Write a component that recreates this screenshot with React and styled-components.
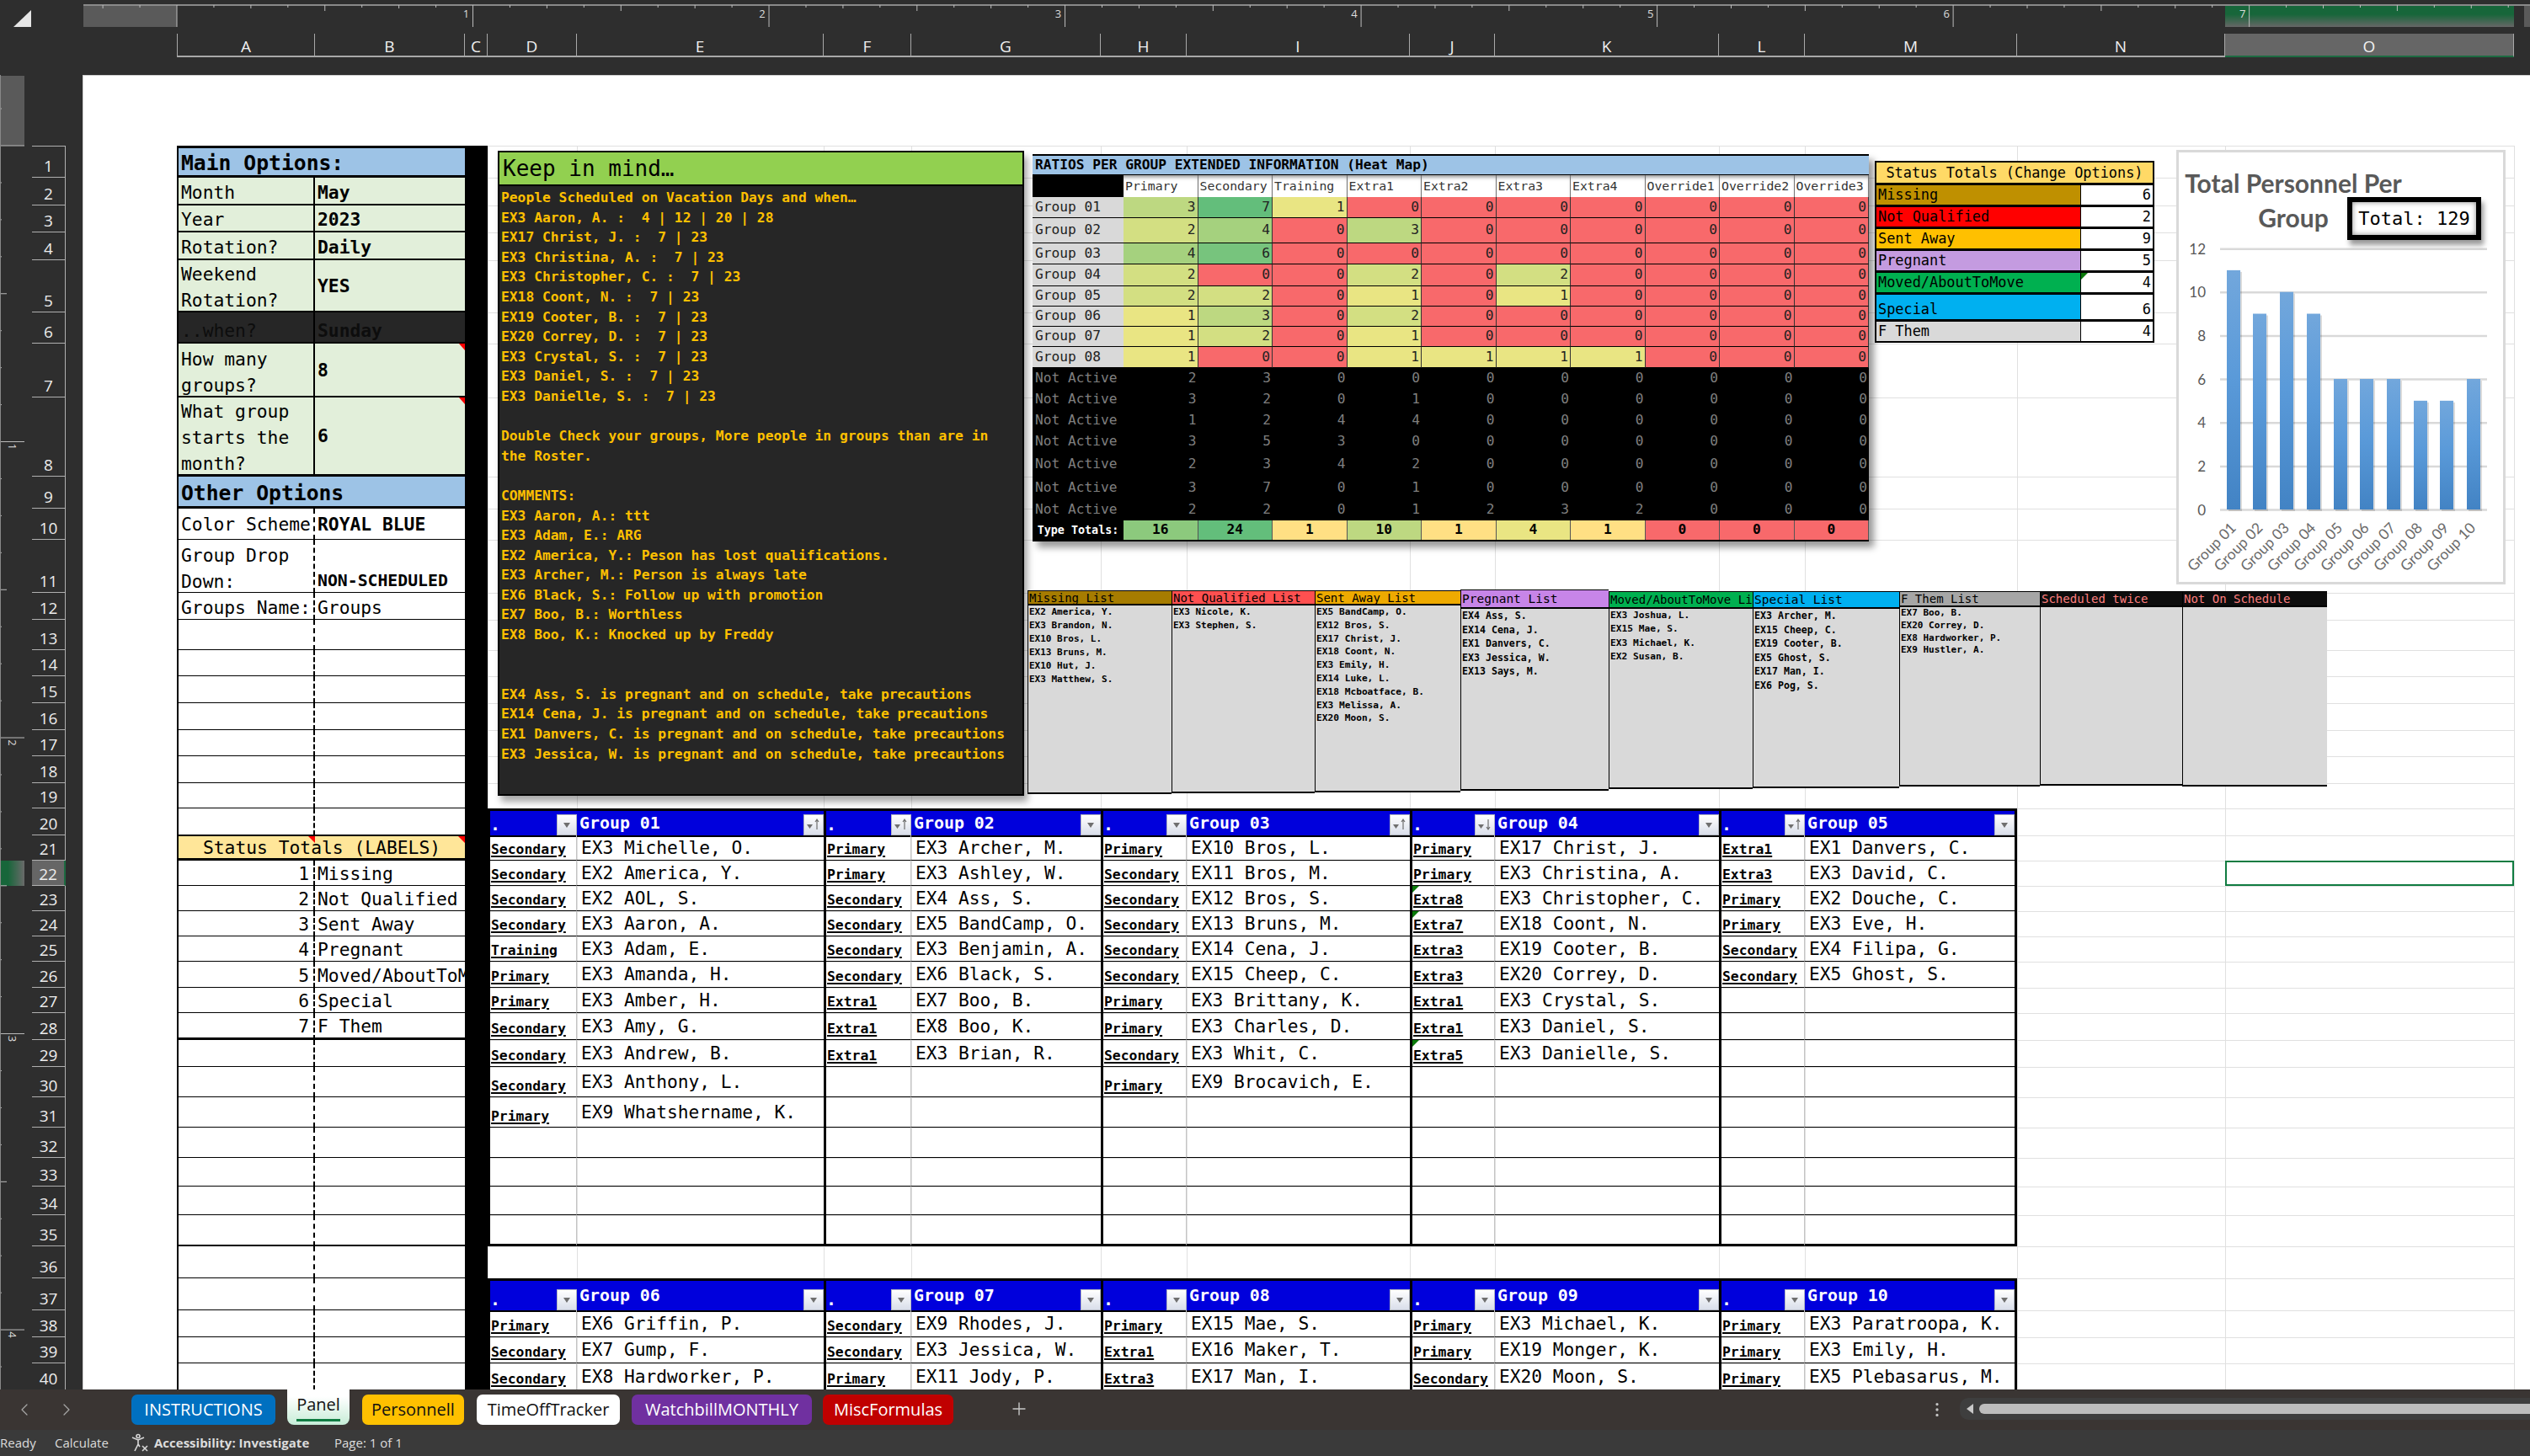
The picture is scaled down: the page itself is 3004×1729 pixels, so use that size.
import React, { Fragment } from "react";
import styled, { createGlobalStyle } from "styled-components";
import { ChevronLeft, ChevronRight, Plus, MoreVertical } from "lucide-react";

const mono = '"DejaVu Sans Mono", "Liberation Mono", monospace';
const ui = '"Open Sans", "Noto Sans", sans-serif';

const colEdges = [210, 374, 552, 579, 685, 978, 1082, 1307, 1409, 1674, 1775, 2041, 2143, 2395, 2642, 2985];
const rowEdges = [173, 211, 244, 276, 309, 371, 408, 472, 566, 604, 641, 704, 736, 772, 803, 835, 867, 898, 930, 960, 992, 1022, 1052, 1082, 1112, 1142, 1173, 1203, 1235, 1267, 1303, 1339, 1375, 1409, 1443, 1480, 1518, 1556, 1588, 1619, 1651];
const colNames = "ABCDEFGHIJKLMNO".split("");
const colTracks = colEdges.slice(1).map((x, i) => `${x - colEdges[i]}px`).join(" ");
const rowTracks = rowEdges.slice(1).map((y, i) => `${y - rowEdges[i]}px`).join(" ");

const GlobalStyle = createGlobalStyle`
html, body { margin: 0; padding: 0; overflow: hidden; background: #2e2e2e; }
* { box-sizing: border-box; }
`;

const Window = styled.div`
width: 3004px;
height: 1729px;
display: flex;
flex-direction: column;
background: #2e2e2e;
overflow: hidden;
`;

/* ---------- top ruler + column letters ---------- */
const RulerRow = styled.div`
height: 40px;
display: flex;
flex: none;
`;

const Corner = styled.div`
width: 99px;
padding: 12px 0 0 16px;
`;

const CornerMark = styled.div`
width: 21px;
height: 20px;
background: #e6e6e6;
clip-path: polygon(100% 0, 100% 100%, 0 100%);
`;

const ColumnBar = styled.div`
height: 49px;
flex: none;
display: grid;
grid-template-columns: ${colTracks};
grid-template-rows: 28px;
padding-left: 210px;
`;

const ColumnHead = styled.div`
display: flex;
align-items: center;
justify-content: center;
padding-top: 3px;
font: 19px ${ui};
color: #f0f0f0;
border-right: 1px solid #a8a8a8;
border-bottom: 2px solid ${p => (p.$active ? "#1d6b41" : "#a8a8a8")};
background: ${p => (p.$active ? "#666" : "transparent")};
&:first-child { border-left: 1px solid #a8a8a8; }
`;

/* ---------- left rail ---------- */
const Body = styled.div`
height: 1561px;
flex: none;
display: flex;
`;

const Rail = styled.div`
width: 98px;
flex: none;
display: flex;
overflow: hidden;
`;

const RowHeads = styled.div`
width: 40px;
margin-left: 9px;
padding-top: 84px;
display: grid;
grid-template-rows: ${rowTracks};
align-content: start;
`;

const RowHead = styled.div`
display: flex;
align-items: flex-end;
justify-content: center;
font: 19px/26px ${ui};
color: #ececec;
border-bottom: 1px solid #b0b0b0;
border-right: ${p => (p.$active ? "2px solid #1d6b41" : "1px solid #b0b0b0")};
background: ${p => (p.$active ? "#666" : "transparent")};
&:first-child { border-top: 1px solid #b0b0b0; }
`;

/* ---------- the sheet ---------- */
const Sheet = styled.div`
position: relative;
flex: 1;
background: #fff;
overflow: hidden;
box-shadow: inset 1px 1px 0 #cfcfcf;
`;

const GridLines = styled.div`
position: absolute;
left: 112px;
top: 84px;
display: grid;
grid-template-columns: ${colTracks};
grid-template-rows: ${rowTracks};
border-top: 1px solid #e0e0e0;
border-left: 1px solid #e0e0e0;
`;

const GridCell = styled.div`
border-right: 1px solid #e0e0e0;
border-bottom: 1px solid #e0e0e0;
`;

const Cells = styled.div`
position: relative;
padding: 84px 0 0 112px;
display: grid;
grid-template-columns: ${colTracks};
grid-template-rows: ${rowTracks};
justify-content: start;
`;

const Selected = styled.div`
grid-column: 15;
grid-row: 22;
border: 2px solid #107c41;
`;

const BlackColumn = styled.div`
grid-column: 3;
grid-row: 1 / -1;
background: #000;
`;

/* ---------- options column ---------- */
const Options = styled.div`
grid-column: 1 / 3;
grid-row: 1 / -1;
display: grid;
grid-template-columns: subgrid;
grid-template-rows: subgrid;
border-left: 2px solid #000;
border-top: 3px solid #000;
font: 21.3px/31px ${mono};
color: #000;
`;

const SectionHead = styled.div`
grid-column: 1 / 3;
background: #9dc3e6;
font-size: 24.7px;
font-weight: ${p => (p.$bold ? 700 : 400)};
padding: 3px 0 0 3px;
border-bottom: 3px solid #000;
display: flex;
align-items: center;
`;

const OptCell = styled.div`
position: relative;
display: flex;
align-items: ${p => p.$v || "flex-end"};
justify-content: ${p => (p.$right ? "flex-end" : "flex-start")};
padding: 0 ${p => (p.$right ? "5px" : "2px")} 0 3px;
background: ${p => p.$fill || "#fff"};
color: ${p => p.$ink || "#000"};
font-weight: ${p => (p.$bold ? 700 : 400)};
font-size: ${p => p.$size || "21.3px"};
white-space: ${p => (p.$wrap ? "normal" : "nowrap")};
overflow: hidden;
border-bottom: ${p => p.$line || "1px solid #000"};
border-right: ${p => p.$divider || "none"};
${p => p.$flag && `
&::after {
    content: "";
    position: absolute;
    right: 0;
    top: 0;
    width: 7px;
    height: 8px;
    background: #f00;
    clip-path: polygon(0 0, 100% 0, 100% 100%);
}`}
`;

const OptText = styled.span`
margin-bottom: ${p => p.$drop}px;
`;

const StatusHead = styled.div`
position: relative;
grid-column: 1 / 3;
background: #ffe699;
display: flex;
align-items: center;
justify-content: center;
border-top: 1px solid #000;
border-bottom: 3px solid #000;
&::before, &::after {
    content: "";
    position: absolute;
    top: 0;
    width: 8px;
    height: 8px;
    background: #f00;
    clip-path: polygon(0 0, 100% 0, 100% 100%);
}
&::before { right: 178px; }
&::after { right: 0; }
`;

/* ---------- group tables ---------- */
const GroupBox = styled.div`
grid-column: ${p => p.$col} / span 2;
grid-row: ${p => p.$row} / span ${p => p.$span};
display: grid;
grid-template-columns: subgrid;
grid-template-rows: subgrid;
border-left: 3px solid #000;
border-right: ${p => (p.$last ? "3px solid #000" : "none")};
`;

const GroupHead = styled.div`
display: flex;
justify-content: space-between;
align-items: flex-end;
background: #0000dc;
color: #fff;
border-top: 3px solid #000;
box-shadow: 0 2px 0 #000;
font: 700 19.9px/25px ${mono};
padding-left: ${p => (p.$name ? "3px" : "0")};
`;

const HeadText = styled.span`
align-self: center;
`;

const Dot = styled.span`
align-self: flex-end;
line-height: 24px;
`;

const FilterBox = styled.div`
width: 24px;
height: 25px;
flex: none;
display: flex;
align-items: center;
justify-content: center;
background: linear-gradient(#fff, #d9deea);
border: 1px solid #b4b8c2;
`;

const TypeCell = styled.div`
position: relative;
display: flex;
align-items: flex-end;
padding: 0 0 2px 1px;
font: 700 16.4px/20px ${mono};
color: #000;
text-decoration: underline;
text-decoration-thickness: 2px;
text-underline-offset: 2px;
white-space: nowrap;
overflow: hidden;
border-right: 1px solid #c4c4c4;
border-bottom: ${p => (p.$end ? "3px solid #000" : "1px solid #000")};
${p => p.$flag && `
&::before {
    content: "";
    position: absolute;
    left: 0;
    top: 0;
    width: 8px;
    height: 8px;
    background: #0a7a0a;
    clip-path: polygon(0 0, 100% 0, 0 100%);
}`}
`;

const NameCell = styled.div`
display: flex;
align-items: center;
padding-left: 5px;
font: 21.2px/26px ${mono};
color: #000;
white-space: nowrap;
overflow: hidden;
border-bottom: ${p => (p.$end ? "3px solid #000" : "1px solid #000")};
`;

/* ---------- floating shapes ---------- */
const KeepBox = styled.div`
position: absolute;
left: 493px;
top: 90px;
width: 625px;
height: 766px;
background: #262626;
border: 2px solid #000;
box-shadow: 4px 7px 8px rgba(0, 0, 0, 0.35);
`;

const KeepHead = styled.div`
height: 40px;
padding-left: 4px;
background: #92d050;
border-bottom: 2px solid #000;
font: 26px/38px ${mono};
color: #000;
`;

const KeepLines = styled.div`
padding: 2px 0 0 2px;
font: 700 16.3px/23.6px ${mono};
color: #ffc000;
`;

const KeepLine = styled.div`
height: 23.6px;
white-space: pre;
`;

const HeatMap = styled.div`
position: absolute;
left: 1128px;
top: 94px;
width: 993px;
display: grid;
grid-template-columns: 108px repeat(10, 88.5px);
grid-template-rows: 23px 26px 25px 30px 25px 26px 24px 24px 24px 25px 25px 25px 25px 25px 28px 28px 25px 23px;
background: #000;
border-top: 2px solid #000;
border-bottom: 2px solid #000;
font: 16.2px/1 ${mono};
box-shadow: 6px 7px 8px rgba(0, 0, 0, 0.4);
box-sizing: content-box;
`;

const HeatTitle = styled.div`
grid-column: 1 / -1;
background: #9dc3e6;
border-bottom: 1px solid #000;
display: flex;
align-items: center;
padding-left: 3px;
color: #000;
font-weight: 700;
`;

const HeatCorner = styled.div`
background: #000;
`;

const HeatHead = styled.div`
background: #fff;
box-shadow: inset 0 5px 5px -3px #888;
border-right: 1px solid #777;
display: flex;
align-items: center;
padding-left: 2px;
font-size: 14.8px;
color: #333;
white-space: nowrap;
overflow: hidden;
`;

const HeatLabel = styled.div`
display: flex;
align-items: center;
padding-left: 3px;
background: ${p => (p.$on ? "#d9d9d9" : "#000")};
color: ${p => (p.$on ? "#222" : "#7f7f7f")};
border-bottom: ${p => (p.$on ? "1px solid #000" : "none")};
white-space: nowrap;
`;

const HeatCell = styled.div`
display: flex;
align-items: center;
justify-content: flex-end;
padding-right: 2px;
background: ${p => p.$fill || "#000"};
color: ${p => (p.$fill ? "#222" : "#7f7f7f")};
border-right: ${p => (p.$fill ? "1px solid #333" : "none")};
border-bottom: ${p => (p.$fill ? "1px solid #000" : "none")};
`;

const TotalLabel = styled.div`
display: flex;
align-items: center;
justify-content: center;
background: #000;
color: #fff;
font-weight: 700;
font-size: 13.4px;
white-space: nowrap;
`;

const TotalCell = styled.div`
display: flex;
align-items: center;
justify-content: center;
background: ${p => p.$fill};
color: #000;
font-weight: 700;
font-size: 16.2px;
border-right: 1px solid #555;
`;

const StatusBox = styled.div`
position: absolute;
left: 2128px;
top: 102px;
width: 332px;
display: flex;
flex-direction: column;
border: 2px solid #000;
font: 16.9px/1 ${mono};
color: #000;
`;

const StatusTitle = styled.div`
height: 24px;
display: flex;
align-items: center;
justify-content: center;
background: #ffd966;
white-space: nowrap;
`;

const StatusRow = styled.div`
height: ${p => p.$h}px;
display: grid;
grid-template-columns: 242px 1fr;
border-top: 3px solid #000;
`;

const StatusName = styled.div`
display: flex;
align-items: center;
padding: ${p => (p.$tall ? "6px" : "0")} 0 0 2px;
background: ${p => p.$fill};
`;

const StatusCount = styled.div`
position: relative;
display: flex;
align-items: center;
justify-content: flex-end;
padding: ${p => (p.$tall ? "6px" : "0")} 2px 0 0;
background: #fff;
border-left: 1px solid #000;
${p => p.$flag && `
&::before {
    content: "";
    position: absolute;
    left: 0;
    top: 0;
    width: 8px;
    height: 8px;
    background: #0a7a0a;
    clip-path: polygon(0 0, 100% 0, 0 100%);
}`}
`;

const Chart = styled.div`
position: absolute;
left: 2486px;
top: 89px;
width: 391px;
height: 516px;
background: #fff;
border: 3px solid #d9d9d9;
`;

const ChartTitle = styled.div`
width: 272px;
padding-top: 16px;
text-align: center;
font: 700 30px/41px Lato, "Open Sans", sans-serif;
color: #595959;
`;

const ChartSvg = styled.svg`
display: block;
`;

const TotalBadge = styled.div`
position: absolute;
left: 200px;
top: 53px;
width: 159px;
height: 51px;
display: flex;
align-items: center;
justify-content: center;
background: #fff;
border: 6px solid #000;
box-shadow: inset 0 0 6px #888, 3px 6px 6px rgba(0, 0, 0, 0.4);
font: 22px/1 ${mono};
color: #000;
`;

const ListStrip = styled.div`
position: absolute;
left: 1122px;
top: 611px;
display: flex;
align-items: flex-start;
`;

const ListCol = styled.div`
width: ${p => p.$w}px;
height: ${p => p.$h}px;
margin-top: ${p => p.$top}px;
flex: none;
background: #d9d9d9;
border-left: 1px solid #000;
border-top: 1px solid #000;
border-bottom: 2px solid #000;
overflow: hidden;
`;

const ListHead = styled.div`
height: ${p => p.$hh}px;
display: flex;
align-items: center;
padding-left: 1px;
background: ${p => p.$bg};
color: ${p => p.$fg};
border-bottom: 2px solid #000;
font: ${p => p.$hs}px/1 ${mono};
white-space: nowrap;
overflow: hidden;
`;

const ListItem = styled.div`
height: ${p => p.$pitch}px;
padding-left: 1px;
font: 700 ${p => p.$fs}px/${p => p.$pitch}px ${mono};
color: #000;
white-space: nowrap;
`;

/* ---------- tabs and status ---------- */
const TabBar = styled.div`
height: 48px;
flex: none;
display: flex;
align-items: flex-start;
background: #3a3533;
color: #c8c8c8;
`;

const TabNav = styled.div`
width: 156px;
height: 100%;
display: flex;
align-items: center;
gap: 26px;
padding-left: 17px;
color: #a8a8a8;
flex: none;
`;

const Tab = styled.div`
width: ${p => p.$w}px;
height: ${p => (p.$current ? 42 : 36)}px;
margin-top: ${p => (p.$current ? 0 : 6)}px;
margin-right: ${p => p.$gap}px;
position: relative;
flex: none;
display: flex;
justify-content: center;
align-items: ${p => (p.$current ? "flex-start" : "center")};
padding-top: ${p => (p.$current ? "4px" : "0")};
background: ${p => (p.$current ? "linear-gradient(#fff 20%, #c6ecd6)" : p.$bg)};
color: ${p => p.$fg};
font: 20px/28px ${ui};
border-radius: ${p => (p.$current ? "0 0 8px 8px" : "7px")};
white-space: nowrap;
${p => p.$current && `
&::after {
    content: "";
    position: absolute;
    left: 11px;
    right: 11px;
    bottom: 4px;
    height: 3px;
    background: #107c41;
}`}
`;

const AddSheet = styled.div`
margin: 11px 0 0 66px;
color: #c8c8c8;
display: flex;
`;

const TabDots = styled.div`
margin: 13px 0 0 1067px;
display: flex;
color: #c8c8c8;
`;

const ScrollTrack = styled.div`
flex: 1;
height: 26px;
margin: 10px 0 0 16px;
background: #3e3e3e;
border-radius: 10px 0 0 10px;
display: flex;
align-items: center;
padding-left: 8px;
gap: 7px;
`;

const ScrollArrow = styled.div`
width: 8px;
height: 12px;
background: #c8c8c8;
clip-path: polygon(100% 0, 100% 100%, 0 50%);
`;

const ScrollThumb = styled.div`
flex: 1;
height: 12px;
background: #bdbdbd;
border-radius: 6px 0 0 6px;
`;

const Footer = styled.div`
height: 31px;
flex: none;
display: flex;
align-items: center;
background: #3a3a3a;
color: #dcdcdc;
font: 15px/1 ${ui};
padding-bottom: 1px;
`;

const FooterItem = styled.div`
width: ${p => p.$w}px;
flex: none;
display: flex;
align-items: center;
gap: 5px;
font-weight: ${p => (p.$bold ? 700 : 400)};
white-space: nowrap;
`;

/* ---------- data ---------- */
const keepHead = "Keep in mind…";
const keepLines = [
    "People Scheduled on Vacation Days and when…",
    "EX3 Aaron, A. :  4 | 12 | 20 | 28",
    "EX17 Christ, J. :  7 | 23",
    "EX3 Christina, A. :  7 | 23",
    "EX3 Christopher, C. :  7 | 23",
    "EX18 Coont, N. :  7 | 23",
    "EX19 Cooter, B. :  7 | 23",
    "EX20 Correy, D. :  7 | 23",
    "EX3 Crystal, S. :  7 | 23",
    "EX3 Daniel, S. :  7 | 23",
    "EX3 Danielle, S. :  7 | 23",
    "",
    "Double Check your groups, More people in groups than are in",
    "the Roster.",
    "",
    "COMMENTS:",
    "EX3 Aaron, A.: ttt",
    "EX3 Adam, E.: ARG",
    "EX2 America, Y.: Peson has lost qualifications.",
    "EX3 Archer, M.: Person is always late",
    "EX6 Black, S.: Follow up with promotion",
    "EX7 Boo, B.: Worthless",
    "EX8 Boo, K.: Knocked up by Freddy",
    "",
    "",
    "EX4 Ass, S. is pregnant and on schedule, take precautions",
    "EX14 Cena, J. is pregnant and on schedule, take precautions",
    "EX1 Danvers, C. is pregnant and on schedule, take precautions",
    "EX3 Jessica, W. is pregnant and on schedule, take precautions",
];

const heatColor = { 0: "#f8696b", 1: "#e9e583", 2: "#d3df82", 3: "#bdd881", 4: "#a5d17e", 5: "#8fcb7e", 6: "#77c47d", 7: "#63be7b" };
const heatHeads = ["Primary", "Secondary", "Training", "Extra1", "Extra2", "Extra3", "Extra4", "Override1", "Override2", "Override3"];
const heatGroups = [
    [3, 7, 1, 0, 0, 0, 0, 0, 0, 0],
    [2, 4, 0, 3, 0, 0, 0, 0, 0, 0],
    [4, 6, 0, 0, 0, 0, 0, 0, 0, 0],
    [2, 0, 0, 2, 0, 2, 0, 0, 0, 0],
    [2, 2, 0, 1, 0, 1, 0, 0, 0, 0],
    [1, 3, 0, 2, 0, 0, 0, 0, 0, 0],
    [1, 2, 0, 1, 0, 0, 0, 0, 0, 0],
    [1, 0, 0, 1, 1, 1, 1, 0, 0, 0],
];
const heatIdle = [
    [2, 3, 0, 0, 0, 0, 0, 0, 0, 0],
    [3, 2, 0, 1, 0, 0, 0, 0, 0, 0],
    [1, 2, 4, 4, 0, 0, 0, 0, 0, 0],
    [3, 5, 3, 0, 0, 0, 0, 0, 0, 0],
    [2, 3, 4, 2, 0, 0, 0, 0, 0, 0],
    [3, 7, 0, 1, 0, 0, 0, 0, 0, 0],
    [2, 2, 0, 1, 2, 3, 2, 0, 0, 0],
];
const heatTotals = [
    [16, "#8cc97d"], [24, "#63be7b"], [1, "#ffe084"], [10, "#bdd881"], [1, "#ffe084"],
    [4, "#e9e583"], [1, "#ffe084"], [0, "#f8696b"], [0, "#f8696b"], [0, "#f8696b"],
];

const statusRows = [
    ["Missing", "#bf9000", 6, 26],
    ["Not Qualified", "#ff0000", 2, 26],
    ["Sent Away", "#ffc000", 9, 26],
    ["Pregnant", "#c49be0", 5, 26],
    ["Moved/AboutToMove", "#00b050", 4, 26],
    ["Special", "#00b0f0", 6, 32],
    ["F Them", "#d9d9d9", 4, 26],
];

const statusLabels = ["Missing", "Not Qualified", "Sent Away", "Pregnant", "Moved/AboutToMove", "Special", "F Them"];

const lists = [
    { w: 171, top: 1, h: 242, hh: 17, hs: 14, bg: "#a67c00", fg: "#000", fs: 11, pitch: 16, head: "Missing List", names: ["EX2 America, Y.", "EX3 Brandon, N.", "EX10 Bros, L.", "EX13 Bruns, M.", "EX10 Hut, J.", "EX3 Matthew, S."] },
    { w: 170, top: 1, h: 241, hh: 17, hs: 14, bg: "#ff5050", fg: "#000", fs: 11, pitch: 16, head: "Not Qualified List", names: ["EX3 Nicole, K.", "EX3 Stephen, S."] },
    { w: 173, top: 1, h: 240, hh: 17, hs: 14, bg: "#eeaa00", fg: "#000", fs: 11.2, pitch: 15.8, head: "Sent Away List", names: ["EX5 BandCamp, O.", "EX12 Bros, S.", "EX17 Christ, J.", "EX18 Coont, N.", "EX3 Emily, H.", "EX14 Luke, L.", "EX18 Mcboatface, B.", "EX3 Melissa, A.", "EX20 Moon, S."] },
    { w: 176, top: 0, h: 239, hh: 22, hs: 14.5, bg: "#c785e8", fg: "#000", fs: 11.6, pitch: 16.6, head: "Pregnant List", names: ["EX4 Ass, S.", "EX14 Cena, J.", "EX1 Danvers, C.", "EX3 Jessica, W.", "EX13 Says, M."] },
    { w: 171, top: 2, h: 235, hh: 20, hs: 14, bg: "#00b050", fg: "#000", fs: 11.2, pitch: 16.4, head: "Moved/AboutToMove List", names: ["EX3 Joshua, L.", "EX15 Mae, S.", "EX3 Michael, K.", "EX2 Susan, B."] },
    { w: 174, top: 2, h: 234, hh: 20, hs: 14.5, bg: "#00b0f0", fg: "#000", fs: 11.6, pitch: 16.5, head: "Special List", names: ["EX3 Archer, M.", "EX15 Cheep, C.", "EX19 Cooter, B.", "EX5 Ghost, S.", "EX17 Man, I.", "EX6 Pog, S."] },
    { w: 167, top: 2, h: 232, hh: 18, hs: 14, bg: "#a6a6a6", fg: "#000", fs: 11, pitch: 14.8, head: "F Them List", names: ["EX7 Boo, B.", "EX20 Correy, D.", "EX8 Hardworker, P.", "EX9 Hustler, A."] },
    { w: 169, top: 2, h: 231, hh: 18, hs: 14, bg: "#0d0d0d", fg: "#ff7f7f", fs: 11, pitch: 16, head: "Scheduled twice", names: [] },
    { w: 172, top: 2, h: 232, hh: 18, hs: 14, bg: "#0d0d0d", fg: "#ff7f7f", fs: 11, pitch: 16, head: "Not On Schedule", names: [] },
];

const topGroups = [
    { col: 4, title: "Group 01", nameSort: "up", rows: [["Secondary", "EX3 Michelle, O."], ["Secondary", "EX2 America, Y."], ["Secondary", "EX2 AOL, S."], ["Secondary", "EX3 Aaron, A."], ["Training", "EX3 Adam, E."], ["Primary", "EX3 Amanda, H."], ["Primary", "EX3 Amber, H."], ["Secondary", "EX3 Amy, G."], ["Secondary", "EX3 Andrew, B."], ["Secondary", "EX3 Anthony, L."], ["Primary", "EX9 Whatshername, K."]] },
    { col: 6, title: "Group 02", typeSort: "up", rows: [["Primary", "EX3 Archer, M."], ["Primary", "EX3 Ashley, W."], ["Secondary", "EX4 Ass, S."], ["Secondary", "EX5 BandCamp, O."], ["Secondary", "EX3 Benjamin, A."], ["Secondary", "EX6 Black, S."], ["Extra1", "EX7 Boo, B."], ["Extra1", "EX8 Boo, K."], ["Extra1", "EX3 Brian, R."]] },
    { col: 8, title: "Group 03", nameSort: "up", rows: [["Primary", "EX10 Bros, L."], ["Secondary", "EX11 Bros, M."], ["Secondary", "EX12 Bros, S."], ["Secondary", "EX13 Bruns, M."], ["Secondary", "EX14 Cena, J."], ["Secondary", "EX15 Cheep, C."], ["Primary", "EX3 Brittany, K."], ["Primary", "EX3 Charles, D."], ["Secondary", "EX3 Whit, C."], ["Primary", "EX9 Brocavich, E."]] },
    { col: 10, title: "Group 04", typeSort: "down", rows: [["Primary", "EX17 Christ, J."], ["Primary", "EX3 Christina, A."], ["Extra8", "EX3 Christopher, C.", true], ["Extra7", "EX18 Coont, N.", true], ["Extra3", "EX19 Cooter, B."], ["Extra3", "EX20 Correy, D."], ["Extra1", "EX3 Crystal, S."], ["Extra1", "EX3 Daniel, S."], ["Extra5", "EX3 Danielle, S.", true]] },
    { col: 12, title: "Group 05", typeSort: "up", last: true, rows: [["Extra1", "EX1 Danvers, C."], ["Extra3", "EX3 David, C."], ["Primary", "EX2 Douche, C."], ["Primary", "EX3 Eve, H."], ["Secondary", "EX4 Filipa, G."], ["Secondary", "EX5 Ghost, S."]] },
];

const bottomGroups = [
    { col: 4, title: "Group 06", rows: [["Primary", "EX6 Griffin, P."], ["Secondary", "EX7 Gump, F."], ["Secondary", "EX8 Hardworker, P."]] },
    { col: 6, title: "Group 07", rows: [["Secondary", "EX9 Rhodes, J."], ["Secondary", "EX3 Jessica, W."], ["Primary", "EX11 Jody, P."]] },
    { col: 8, title: "Group 08", rows: [["Primary", "EX15 Mae, S."], ["Extra1", "EX16 Maker, T."], ["Extra3", "EX17 Man, I."]] },
    { col: 10, title: "Group 09", rows: [["Primary", "EX3 Michael, K."], ["Primary", "EX19 Monger, K."], ["Secondary", "EX20 Moon, S."]] },
    { col: 12, title: "Group 10", last: true, rows: [["Primary", "EX3 Paratroopa, K."], ["Primary", "EX3 Emily, H."], ["Primary", "EX5 Plebasarus, M."]] },
];

const tabs = [
    { name: "INSTRUCTIONS", w: 171, gap: 14, bg: "#0070c0", fg: "#fff" },
    { name: "Panel", w: 74, gap: 15, current: true, fg: "#111" },
    { name: "Personnell", w: 121, gap: 15, bg: "#ffc000", fg: "#111" },
    { name: "TimeOffTracker", w: 170, gap: 14, bg: "#fff", fg: "#111" },
    { name: "WatchbillMONTHLY", w: 214, gap: 13, bg: "#7030a0", fg: "#fff" },
    { name: "MiscFormulas", w: 155, gap: 0, bg: "#c00000", fg: "#fff" },
];

const barValues = [11, 9, 10, 9, 6, 6, 6, 5, 5, 6];
const barLeft = [2644, 2675, 2707, 2739, 2771, 2802, 2834, 2866, 2897, 2929];

/* ---------- drawings ---------- */
const TopRuler = () => {
    const ticks = [];
    for (let k = -2; 210 + k * 43.94 < 3000; k++) {
        const x = 210 + k * 43.94;
        const end = k % 8 === 0 ? 32 : k % 4 === 0 ? 13 : k % 2 === 0 ? 10 : 9;
        ticks.push(<line key={k} x1={x} x2={x} y1={6} y2={end} stroke="#bdbdbd" strokeWidth="1" />);
        if (k % 8 === 0 && k > 0) {
            ticks.push(<text key={`n${k}`} x={x - 8} y={21} fontSize="13" textAnchor="middle" fill="#ddd" fontFamily="Open Sans">{k / 8}</text>);
        }
    }
    return (
        <svg width="2905" height="40" viewBox="99 0 2905 40">
            <defs>
                <linearGradient id="topSel" x1="0" y1="0" x2="0" y2="1">
                    <stop offset="0" stopColor="#17663a" />
                    <stop offset="0.4" stopColor="#17663a" />
                    <stop offset="1" stopColor="#666" />
                </linearGradient>
            </defs>
            <rect x="99" y="7" width="111" height="25" fill="#5a5a5a" />
            <rect x="2642" y="7" width="343" height="25" fill="url(#topSel)" />
            <rect x="2997" y="7" width="7" height="25" fill="#5a5a5a" />
            <line x1="99" x2="3004" y1="6" y2="6" stroke="#a8a8a8" strokeWidth="1.5" />
            {ticks}
        </svg>
    );
};

const SideRuler = () => {
    const ticks = [];
    for (let k = -1; 173 + k * 43.94 < 1650; k++) {
        const y = 173 + k * 43.94;
        const end = k % 8 === 0 ? 29 : k % 4 === 0 ? 8 : 2;
        ticks.push(<line key={k} x1={1} x2={end} y1={y} y2={y} stroke="#bdbdbd" strokeWidth="1" />);
        if (k % 8 === 0 && k > 0) {
            const cy = y + 6;
            ticks.push(<text key={`n${k}`} x={10} y={cy} fontSize="13" textAnchor="middle" fill="#ddd" fontFamily="Open Sans" transform={`rotate(90 10 ${cy})`}>{k / 8}</text>);
        }
    }
    return (
        <svg width="29" height="1561" viewBox="0 89 29 1561">
            <defs>
                <linearGradient id="sideSel" x1="0" y1="0" x2="1" y2="0">
                    <stop offset="0" stopColor="#17663a" />
                    <stop offset="0.3" stopColor="#17663a" />
                    <stop offset="1" stopColor="#6a6a6a" />
                </linearGradient>
            </defs>
            <rect x="1" y="90" width="28" height="83" fill="#5a5a5a" />
            <rect x="1" y="1022" width="28" height="30" fill="url(#sideSel)" />
            <line x1="0.5" x2="0.5" y1="89" y2="1650" stroke="#888" strokeWidth="1" />
            {ticks}
        </svg>
    );
};

const FilterButton = ({ sort }) => (
    <FilterBox>
        <svg width="20" height="19" viewBox="0 0 20 19">
            <path d={sort ? "M2 9h7l-3.5 5z" : "M6 7h8l-4 6z"} fill="#6f6f6f" />
            {sort === "up" && <path d="M14 15V4M12 6l2-3 2 3" stroke="#6f6f6f" strokeWidth="1.2" fill="none" />}
            {sort === "down" && <path d="M14 3v11M12 12l2 3 2-3" stroke="#6f6f6f" strokeWidth="1.2" fill="none" />}
        </svg>
    </FilterBox>
);

const Group = ({ row, span, col, title, rows, typeSort, nameSort, last }) => {
    const blanks = Array.from({ length: span - 1 }, (_, i) => rows[i] || ["", ""]);
    return (
        <GroupBox $col={col} $row={row} $span={span} $last={last}>
            <GroupHead>
                <Dot>.</Dot>
                <FilterButton sort={typeSort} />
            </GroupHead>
            <GroupHead $name>
                <HeadText>{title}</HeadText>
                <FilterButton sort={nameSort} />
            </GroupHead>
            {blanks.map((r, i) => {
                const end = row === 20 && i === blanks.length - 1;
                return (
                    <Fragment key={i}>
                        <TypeCell $end={end} $flag={r[2]}>{r[0]}</TypeCell>
                        <NameCell $end={end}>{r[1]}</NameCell>
                    </Fragment>
                );
            })}
        </GroupBox>
    );
};

// bottom-aligned option text sits a little low in its row, as Consolas does
const Opt = ({ children, ...rest }) => {
    const drop = rest.$v ? 0 : rest.$wrap ? -3 : -2;
    return (
        <OptCell {...rest}>
            <OptText $drop={drop}>{children}</OptText>
        </OptCell>
    );
};

const PersonMark = () => (
    <svg width="23" height="22" viewBox="0 0 23 22" fill="none" stroke="#d8d8d8" strokeWidth="1.6">
        <circle cx="9" cy="3.5" r="2" />
        <path d="M2 5l7 3 7-3M9 8v5M9 13l-4 8M9 13l2 3" />
        <path d="M14 15l6 6M20 15l-6 6" />
    </svg>
);

const TotalsChart = () => (
    <ChartSvg width="385" height="412" viewBox="2587 279 385 412">
        <defs>
            <linearGradient id="bar" x1="0" y1="0" x2="0" y2="1">
                <stop offset="0" stopColor="#72a7dc" />
                <stop offset="0.45" stopColor="#5a9ad9" />
                <stop offset="1" stopColor="#4283c4" />
            </linearGradient>
        </defs>
        {[0, 2, 4, 6, 8, 10, 12].map(v => {
            const y = 605.6 - v * 25.83;
            return (
                <Fragment key={v}>
                    <line x1="2636" x2="2953" y1={y} y2={y} stroke="#d9d9d9" strokeWidth="2.5" />
                    <text x="2619" y={y + 6} fontSize="17" textAnchor="end" fill="#595959" fontFamily="Lato">{v}</text>
                </Fragment>
            );
        })}
        {barValues.map((v, i) => (
            <Fragment key={i}>
                <rect x={barLeft[i] + 2} y={605 - v * 25.83 + 2} width="16" height={v * 25.83} fill="#000" opacity="0.14" />
                <rect x={barLeft[i]} y={605 - v * 25.83} width="16" height={v * 25.83} fill="url(#bar)" />
                <text
                    x={2656 + i * 31.6}
                    y={628}
                    fontSize="17.5"
                    fill="#6b6b6b"
                    fontFamily="Lato"
                    textAnchor="end"
                    transform={`rotate(-45 ${2656 + i * 31.6} 628)`}
                >
                    {`Group ${String(i + 1).padStart(2, "0")}`}
                </text>
            </Fragment>
        ))}
    </ChartSvg>
);

const App = () => {
    const plainRows = [13, 14, 15, 16, 17, 18, 19, 20];
    const tailRows = Array.from({ length: 12 }, (_, i) => i + 29);
    const green = "#e2efda";
    const solid = "2px solid #000";
    const dashed = "2px dashed #000";
    return (
        <Window>
            <GlobalStyle />
            <RulerRow>
                <Corner><CornerMark /></Corner>
                <TopRuler />
            </RulerRow>
            <ColumnBar>
                {colNames.map(c => <ColumnHead key={c} $active={c === "O"}>{c}</ColumnHead>)}
            </ColumnBar>
            <Body>
                <Rail>
                    <SideRuler />
                    <RowHeads>
                        {rowEdges.slice(1).map((_, i) => <RowHead key={i} $active={i === 21}>{i + 1}</RowHead>)}
                    </RowHeads>
                </Rail>
                <Sheet>
                    <GridLines>
                        {Array.from({ length: 600 }, (_, i) => <GridCell key={i} />)}
                    </GridLines>
                    <Cells>
                        <Selected />
                        <Options>
                            <SectionHead $bold>Main Options:</SectionHead>
                            <Opt $fill={green} $divider={solid} $line={solid}>Month</Opt>
                            <Opt $fill={green} $line={solid} $bold>May</Opt>
                            <Opt $fill={green} $divider={solid} $line={solid}>Year</Opt>
                            <Opt $fill={green} $line={solid} $bold>2023</Opt>
                            <Opt $fill={green} $divider={solid} $line={solid}>Rotation?</Opt>
                            <Opt $fill={green} $line={solid} $bold>Daily</Opt>
                            <Opt $fill={green} $divider={solid} $line={solid} $wrap>Weekend Rotation?</Opt>
                            <Opt $fill={green} $line={solid} $bold $v="center">YES</Opt>
                            <Opt $fill="#262626" $ink="#0d0d0d" $divider={solid} $line={solid}>..when?</Opt>
                            <Opt $fill="#262626" $ink="#0d0d0d" $line={solid} $bold>Sunday</Opt>
                            <Opt $fill={green} $divider={solid} $line={solid} $wrap>How many groups?</Opt>
                            <Opt $fill={green} $line={solid} $bold $v="center" $flag>8</Opt>
                            <Opt $fill={green} $divider={solid} $line="3px solid #000" $wrap>What group starts the month?</Opt>
                            <Opt $fill={green} $line="3px solid #000" $bold $v="center" $flag>6</Opt>
                            <SectionHead $bold>Other Options</SectionHead>
                            <Opt $divider={dashed} $v="center">Color Scheme</Opt>
                            <Opt $bold $v="center">ROYAL BLUE</Opt>
                            <Opt $divider={dashed} $wrap>Group Drop Down:</Opt>
                            <Opt $bold $size="19.8px">NON-SCHEDULED</Opt>
                            <Opt $divider={dashed}>Groups Name:</Opt>
                            <Opt>Groups</Opt>
                            {plainRows.map(r => (
                                <Fragment key={r}>
                                    <OptCell $divider={dashed} />
                                    <OptCell />
                                </Fragment>
                            ))}
                            <StatusHead>Status Totals (LABELS)</StatusHead>
                            {statusLabels.map((s, i) => (
                                <Fragment key={s}>
                                    <Opt $divider={dashed} $right $line={i === 6 ? "3px solid #000" : undefined}>{i + 1}</Opt>
                                    <Opt $line={i === 6 ? "3px solid #000" : undefined}>{s}</Opt>
                                </Fragment>
                            ))}
                            {tailRows.map(r => (
                                <Fragment key={r}>
                                    <OptCell $divider={dashed} $line={r === 35 ? "2px solid #000" : undefined} />
                                    <OptCell $line={r === 35 ? "2px solid #000" : undefined} />
                                </Fragment>
                            ))}
                        </Options>
                        <BlackColumn />
                        {topGroups.map(g => <Group key={g.title} row={20} span={16} {...g} />)}
                        {bottomGroups.map(g => <Group key={g.title} row={37} span={4} {...g} />)}
                    </Cells>

                    <KeepBox>
                        <KeepHead>{keepHead}</KeepHead>
                        <KeepLines>
                            {keepLines.map((l, i) => <KeepLine key={i}>{l}</KeepLine>)}
                        </KeepLines>
                    </KeepBox>

                    <HeatMap>
                        <HeatTitle>RATIOS PER GROUP EXTENDED INFORMATION (Heat Map)</HeatTitle>
                        <HeatCorner />
                        {heatHeads.map(h => <HeatHead key={h}>{h}</HeatHead>)}
                        {heatGroups.map((row, r) => (
                            <Fragment key={r}>
                                <HeatLabel $on>{`Group 0${r + 1}`}</HeatLabel>
                                {row.map((v, c) => <HeatCell key={c} $fill={heatColor[v]}>{v}</HeatCell>)}
                            </Fragment>
                        ))}
                        {heatIdle.map((row, r) => (
                            <Fragment key={r}>
                                <HeatLabel>Not Active</HeatLabel>
                                {row.map((v, c) => <HeatCell key={c}>{v}</HeatCell>)}
                            </Fragment>
                        ))}
                        <TotalLabel>Type Totals:</TotalLabel>
                        {heatTotals.map(([v, fill], i) => <TotalCell key={i} $fill={fill}>{v}</TotalCell>)}
                    </HeatMap>

                    <StatusBox>
                        <StatusTitle>Status Totals (Change Options)</StatusTitle>
                        {statusRows.map(([name, fill, n, h]) => (
                            <StatusRow key={name} $h={h}>
                                <StatusName $fill={fill} $tall={h > 26}>{name}</StatusName>
                                <StatusCount $flag={name.startsWith("Moved")} $tall={h > 26}>{n}</StatusCount>
                            </StatusRow>
                        ))}
                    </StatusBox>

                    <Chart>
                        <ChartTitle>Total Personnel Per Group</ChartTitle>
                        <TotalBadge>Total: 129</TotalBadge>
                        <TotalsChart />
                    </Chart>

                    <ListStrip>
                        {lists.map(l => (
                            <ListCol key={l.head} $w={l.w} $h={l.h} $top={l.top}>
                                <ListHead $hh={l.hh} $hs={l.hs} $bg={l.bg} $fg={l.fg}>{l.head}</ListHead>
                                {l.names.map(n => <ListItem key={n} $fs={l.fs} $pitch={l.pitch}>{n}</ListItem>)}
                            </ListCol>
                        ))}
                    </ListStrip>
                </Sheet>
            </Body>
            <TabBar>
                <TabNav>
                    <ChevronLeft size={24} strokeWidth={1.2} />
                    <ChevronRight size={24} strokeWidth={1.2} />
                </TabNav>
                {tabs.map(t => (
                    <Tab key={t.name} $w={t.w} $gap={t.gap} $bg={t.bg} $fg={t.fg} $current={t.current}>{t.name}</Tab>
                ))}
                <AddSheet><Plus size={24} strokeWidth={1.4} /></AddSheet>
                <TabDots><MoreVertical size={22} strokeWidth={1.6} /></TabDots>
                <ScrollTrack>
                    <ScrollArrow />
                    <ScrollThumb />
                </ScrollTrack>
            </TabBar>
            <Footer>
                <FooterItem $w={65}>Ready</FooterItem>
                <FooterItem $w={90}>Calculate</FooterItem>
                <FooterItem $w={242} $bold><PersonMark />Accessibility: Investigate</FooterItem>
                <FooterItem $w={100}>Page: 1 of 1</FooterItem>
            </Footer>
        </Window>
    );
};

export default App;
